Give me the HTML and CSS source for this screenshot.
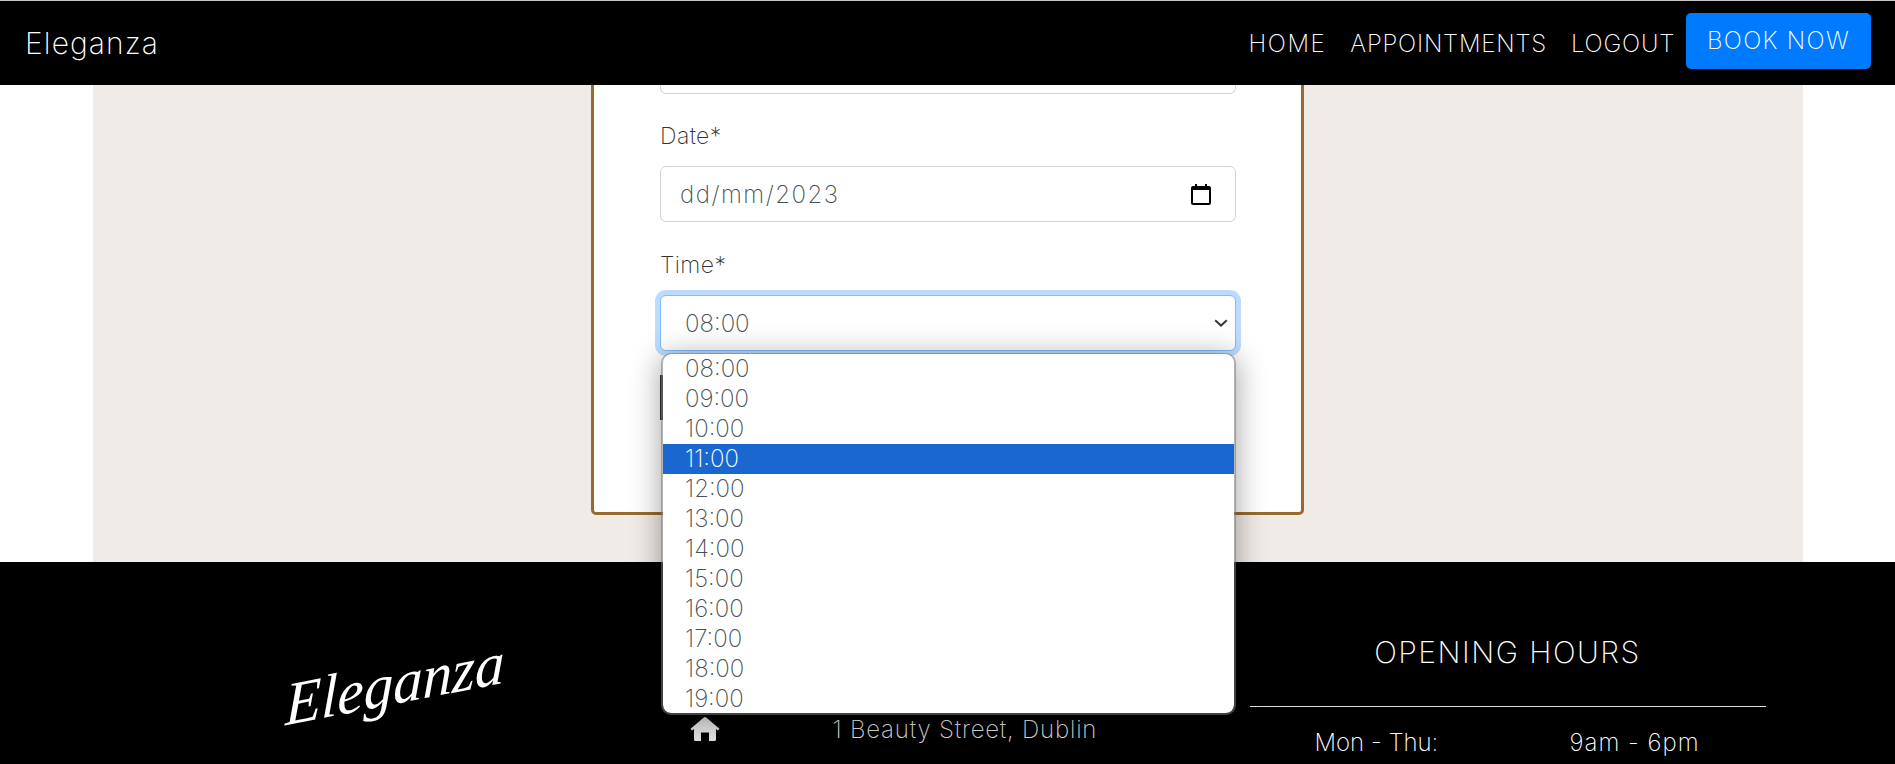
FILE: index.html
```html
<!DOCTYPE html>
<html lang="en">
<head>
<meta charset="utf-8">
<title>Eleganza - Book an appointment</title>
<link rel="stylesheet" href="styles.css">
</head>
<body>
<header class="navbar">
  <a class="brand" href="#">Eleganza</a>
  <nav class="nav">
    <a class="nav-link nav-home" href="#">HOME</a>
    <a class="nav-link" href="#">APPOINTMENTS</a>
    <a class="nav-link nav-logout" href="#">LOGOUT</a>
    <a class="book-btn" href="#">BOOK NOW</a>
  </nav>
</header>
<main class="page">
  <section class="content">
    <form class="card">
      <div class="field field-first">
        <div class="control"></div>
      </div>
      <div class="field field-date">
        <label class="label">Date*</label>
        <div class="control">
          <span class="control-text date-text">dd/mm/2023</span>
          <svg class="calendar" viewBox="0 0 20 21" aria-hidden="true"><path d="M4 0h2v2h8V0h2v2h2a2 2 0 0 1 2 2v15a2 2 0 0 1-2 2H2a2 2 0 0 1-2-2V4a2 2 0 0 1 2-2h2zM2 6v13h16V6z"/></svg>
        </div>
      </div>
      <div class="field field-time">
        <label class="label">Time*</label>
        <div class="control control-focus">
          <span class="control-text select-text">08:00</span>
          <svg class="chevron" viewBox="0 0 14 8" aria-hidden="true"><path d="M1.2 1.2 7 6.6l5.8-5.4" fill="none" stroke="#343a40" stroke-width="2"/></svg>
        </div>
        <ul class="dropdown">
          <li class="option">08:00</li>
          <li class="option">09:00</li>
          <li class="option">10:00</li>
          <li class="option option-active">11:00</li>
          <li class="option">12:00</li>
          <li class="option">13:00</li>
          <li class="option">14:00</li>
          <li class="option">15:00</li>
          <li class="option">16:00</li>
          <li class="option">17:00</li>
          <li class="option">18:00</li>
          <li class="option">19:00</li>
        </ul>
      </div>
      <button class="submit" type="button"></button>
    </form>
  </section>
</main>
<footer class="footer">
  <div class="footer-inner">
    <div class="footer-logo"><span class="logo-text">Eleganza</span></div>
    <div class="footer-contact">
      <div class="contact-row">
        <svg class="home-icon" viewBox="0 0 30 24" aria-hidden="true"><path d="M13.800.5a2 2 0 0 1 2.400 0L29.500 11.800 28 13.500 26 12V22.500A1.500 1.500 0 0 1 24.500 24H19V15.500H11V24H5.500A1.500 1.500 0 0 1 4 22.500V12L2 13.500.5 11.800z"/></svg>
        <span class="address">1 Beauty Street, Dublin</span>
      </div>
    </div>
    <div class="footer-hours">
      <h3 class="hours-title">OPENING HOURS</h3>
      <hr class="hours-rule">
      <div class="hours-row"><span class="hours-day">Mon - Thu:</span><span class="hours-time">9am - 6pm</span></div>
    </div>
  </div>
</footer>
</body>
</html>
```
FILE: styles.css
```css
* { box-sizing: border-box; }
html, body { margin: 0; height: 764px; overflow: hidden; background: #fff; }
body {
  display: flex;
  flex-direction: column;
  font-family: Inter, "Noto Sans", "Liberation Sans", sans-serif;
  font-weight: 230;
}

.navbar {
  flex: 0 0 85px;
  position: relative;
  z-index: 5;
  display: flex;
  align-items: center;
  justify-content: space-between;
  padding: 0 24px 0 25px;
  background: #000;
  border-top: 1px solid #c8c8c8;
}
.brand { color: #fff; font-size: 30px; letter-spacing: 1.1px; text-decoration: none; }
.nav { display: flex; align-items: center; }
.nav-link {
  color: #fff;
  font-size: 24px;
  letter-spacing: 0.8px;
  text-decoration: none;
  margin-right: 24px;
}
.nav-home { letter-spacing: 1.6px; }
.nav-logout { margin-right: 11px; }
.book-btn {
  display: flex;
  align-items: center;
  justify-content: center;
  width: 185px;
  height: 56px;
  margin-top: -4px;
  padding-bottom: 2px;
  border-radius: 5px;
  background: #007bff;
  color: #fff;
  font-size: 24px;
  letter-spacing: 1.3px;
  text-decoration: none;
}

.page {
  flex: 0 0 477px;
  display: flex;
  justify-content: center;
  background: #fff;
}
.content {
  width: 1710px;
  height: 477px;
  display: flex;
  flex-direction: column;
  justify-content: flex-end;
  align-items: center;
  background: #f0ebe7;
  padding-bottom: 47px;
}
.card {
  flex: none;
  width: 713px;
  padding: 0 66px 92px;
  background: #fff;
  border: 3px solid #996a2e;
  border-radius: 5px;
}
.field { position: relative; }
.field-first { margin-bottom: 32px; }
.field-date { margin-bottom: 33px; }
.field-time { margin-bottom: 24px; }
.label {
  display: block;
  height: 40px;
  line-height: 20px;
  color: #333;
  font-size: 23px;
  letter-spacing: 0.4px;
}
.control {
  display: flex;
  align-items: center;
  justify-content: space-between;
  width: 576px;
  height: 56px;
  padding: 0 24px 0 19px;
  background: #fff;
  border: 1px solid #ced4da;
  border-radius: 6px;
}
.control-text { color: #495057; font-size: 24px; }
.date-text { letter-spacing: 1.5px; }
.select-text { padding-left: 5px; }
.calendar { width: 20px; height: 21px; }
.control-focus {
  padding-right: 7px;
  border-color: #80bdff;
  box-shadow: 0 0 0 5px #bcdcff;
}
.chevron { width: 14px; height: 8px; }

.dropdown {
  position: absolute;
  z-index: 3;
  top: 98px;
  left: 1px;
  width: 575px;
  height: 362px;
  margin: 0;
  padding: 0;
  list-style: none;
  overflow: hidden;
  background: #fff;
  background-clip: padding-box;
  border: 2px solid rgba(120, 120, 120, 0.55);
  border-top-width: 1px;
  border-radius: 10px;
  box-shadow: 0 4px 30px rgba(0, 0, 0, 0.38);
}
.option {
  height: 30px;
  padding-left: 22px;
  line-height: 30px;
  color: #495057;
  font-size: 24px;
}
.option-active { background: #1a67d2; color: #fff; }

.submit {
  display: block;
  width: 150px;
  height: 45px;
  padding: 0;
  border: 0;
  background: #333;
}

.footer {
  flex: 1 1 auto;
  background: #000;
  overflow: hidden;
}
.footer-inner {
  width: 1710px;
  margin: 0 auto;
  display: grid;
  grid-template-columns: 570px 570px 570px;
}
.footer-logo {
  display: flex;
  justify-content: center;
  padding: 88px 0 0 34px;
}
.logo-text {
  display: block;
  color: #fff;
  font-family: "Liberation Serif", serif;
  font-style: italic;
  font-size: 60px;
  line-height: 68px;
  transform: rotate(-11deg) skewX(-12deg);
}
.footer-contact { padding: 155px 0 0 27px; }
.contact-row { display: flex; align-items: flex-start; }
.home-icon { width: 30px; height: 24px; fill: #e2e2e2; flex: none; }
.address {
  margin-left: 113px;
  color: #ddd;
  font-size: 24px;
  letter-spacing: 0.8px;
  line-height: 26px;
}
.footer-hours { padding: 72px 37px 0 17px; }
.hours-title {
  margin: 0;
  color: #fff;
  font-size: 30px;
  font-weight: 230;
  letter-spacing: 1.5px;
  line-height: 36px;
  text-align: center;
}
.hours-rule {
  margin: 36px 0 23px;
  border: 0;
  border-top: 1px solid #ddd;
}
.hours-row { display: flex; color: #fff; font-size: 24px; line-height: 26px; padding-left: 65px; }
.hours-day { width: 255px; }
.hours-time { letter-spacing: 1px; }
```
